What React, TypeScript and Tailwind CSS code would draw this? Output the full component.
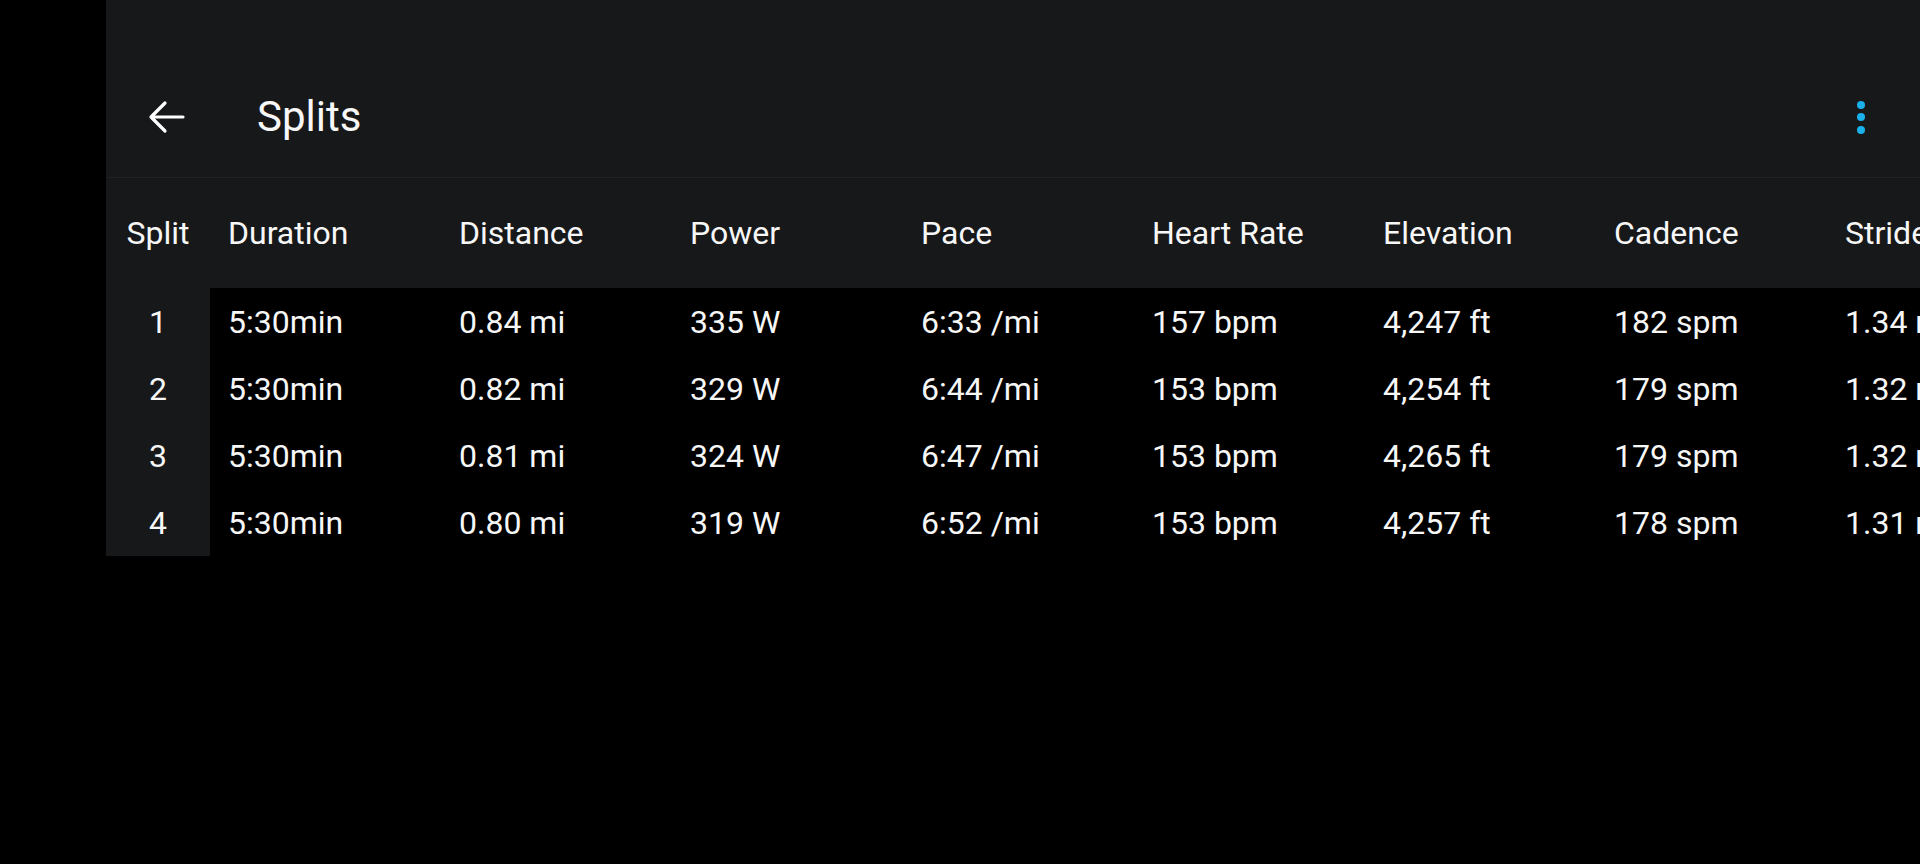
const columns = [
  "Duration",
  "Distance",
  "Power",
  "Pace",
  "Heart Rate",
  "Elevation",
  "Cadence",
  "Stride Length",
];

const rows = [
  ["5:30min", "0.84 mi", "335 W", "6:33 /mi", "157 bpm", "4,247 ft", "182 spm", "1.34 m"],
  ["5:30min", "0.82 mi", "329 W", "6:44 /mi", "153 bpm", "4,254 ft", "179 spm", "1.32 m"],
  ["5:30min", "0.81 mi", "324 W", "6:47 /mi", "153 bpm", "4,265 ft", "179 spm", "1.32 m"],
  ["5:30min", "0.80 mi", "319 W", "6:52 /mi", "153 bpm", "4,257 ft", "178 spm", "1.31 m"],
];

const BackArrow = () => (
  <svg width="40" height="40" viewBox="0 0 40 40" fill="none">
    <path
      d="M37 20H5M19 6L5 20l14 14"
      stroke="white"
      strokeWidth="3.2"
      strokeLinecap="round"
      strokeLinejoin="round"
    />
  </svg>
);

const MoreDots = () => (
  <div className="flex flex-col items-center gap-[4.5px]">
    <span className="block h-[8px] w-[8px] rounded-full bg-[#1ab0ea]" />
    <span className="block h-[8px] w-[8px] rounded-full bg-[#1ab0ea]" />
    <span className="block h-[8px] w-[8px] rounded-full bg-[#1ab0ea]" />
  </div>
);

export default function App() {
  return (
    <div
      className="flex h-[864px] w-[1920px] overflow-hidden bg-black text-[#f7f7f7]"
      style={{ fontFamily: "Roboto, 'Noto Sans', sans-serif" }}
    >
      <div className="w-[106px] shrink-0 bg-black" />

      <div className="flex min-w-0 flex-1 flex-col">
        {/* Top bar */}
        <header className="shrink-0 border-b border-[#202124] bg-[#17181a] pt-[57px]">
          <div className="flex h-[120px] items-center pl-[40px] pr-[55px]">
            <button className="flex h-[40px] w-[40px] items-center justify-center">
              <BackArrow />
            </button>
            <h1 className="ml-[71px] text-[42px] leading-none">Splits</h1>
            <div className="ml-auto">
              <MoreDots />
            </div>
          </div>
        </header>

        {/* Table */}
        <div className="flex flex-col overflow-hidden">
          <div className="flex h-[110px] shrink-0 items-center bg-[#17181a] text-[32px]">
            <div className="w-[104px] shrink-0 text-center">Split</div>
            {columns.map((c) => (
              <div key={c} className="w-[231px] shrink-0 whitespace-nowrap pl-[18px]">
                {c}
              </div>
            ))}
          </div>

          {rows.map((r, i) => (
            <div key={i} className="flex h-[67px] shrink-0 text-[32px]">
              <div className="flex w-[104px] shrink-0 items-center justify-center bg-[#17181a]">
                {i + 1}
              </div>
              {r.map((v, j) => (
                <div
                  key={j}
                  className="flex w-[231px] shrink-0 items-center whitespace-nowrap bg-black pl-[18px]"
                >
                  {v}
                </div>
              ))}
            </div>
          ))}
        </div>
      </div>
    </div>
  );
}
